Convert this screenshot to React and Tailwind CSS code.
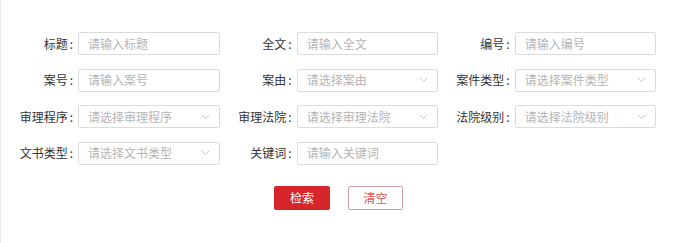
const fields = [
  { label: "标题", placeholder: "请输入标题" },
  { label: "全文", placeholder: "请输入全文" },
  { label: "编号", placeholder: "请输入编号" },
  { label: "案号", placeholder: "请输入案号" },
  { label: "案由", placeholder: "请选择案由", select: true },
  { label: "案件类型", placeholder: "请选择案件类型", select: true },
  { label: "审理程序", placeholder: "请选择审理程序", select: true },
  { label: "审理法院", placeholder: "请选择审理法院", select: true },
  { label: "法院级别", placeholder: "请选择法院级别", select: true },
  { label: "文书类型", placeholder: "请选择文书类型", select: true },
  { label: "关键词", placeholder: "请输入关键词" },
];

function Chevron() {
  return (
    <svg width="9" height="6" viewBox="0 0 9 6" className="shrink-0">
      <path d="M1 1l3.5 3.5L8 1" fill="none" stroke="#c4c4c4" strokeWidth="1" />
    </svg>
  );
}

function Field({ label, placeholder, select }) {
  return (
    <div className="flex items-center h-[23px]">
      <label className="w-[72px] text-right text-[12px] text-[#333] whitespace-nowrap">
        {label}
        <span className="ml-[2px]">:</span>
      </label>
      <div className="ml-[5px] w-[142px] h-[23px] border border-[#dcdcdc] rounded-[2px] flex items-center pl-[9px] pr-[9px] bg-white">
        <span className="flex-1 text-[12px] text-[#b4b4b4] whitespace-nowrap">
          {placeholder}
        </span>
        {select && <Chevron />}
      </div>
    </div>
  );
}

export default function App() {
  return (
    <div
      className="w-[677px] h-[243px] bg-white border-l border-[#eeeeee] overflow-hidden"
      style={{ fontFamily: '"Noto Sans CJK SC", "Liberation Sans", sans-serif' }}
    >
      <div className="pt-[32px] grid grid-cols-[219px_218px_218px] gap-y-[13.5px]">
        {fields.map((f) => (
          <Field key={f.label} {...f} />
        ))}
      </div>
      <div className="mt-[21px] flex justify-center gap-[18px] pr-[1px]">
        <button className="w-[56px] h-[24px] bg-[#d7262b] text-white text-[12px] rounded-[2px]">
          检索
        </button>
        <button className="w-[55px] h-[24px] border border-[#d4a4a4] text-[#e05555] text-[12px] rounded-[2px] bg-white">
          清空
        </button>
      </div>
    </div>
  );
}
